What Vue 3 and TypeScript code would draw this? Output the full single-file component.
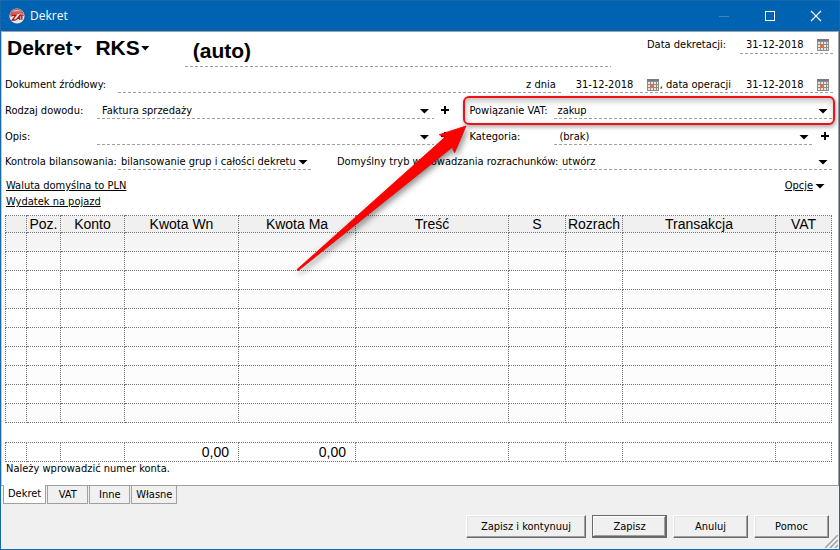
<script setup lang="ts">
import { ref } from 'vue'

interface Column {
  label: string
  width?: number
  total?: string
}

const columns: Column[] = [
  { label: '', width: 21 },
  { label: 'Poz.', width: 34 },
  { label: 'Konto', width: 64 },
  { label: 'Kwota Wn', width: 114, total: '0,00' },
  { label: 'Kwota Ma', width: 117, total: '0,00' },
  { label: 'Treść' },
  { label: 'S', width: 57 },
  { label: 'Rozrach', width: 57 },
  { label: 'Transakcja' },
  { label: 'VAT', width: 56 },
]

const tabs = ['Dekret', 'VAT', 'Inne', 'Własne']
const activeTab = ref('Dekret')

const number = ref('(auto)')
const source = ref('')
const postingDate = ref('31-12-2018')
const documentDate = ref('31-12-2018')
const operationDate = ref('31-12-2018')
</script>

<template>
  <div class="window">
    <header class="titlebar">
      <svg class="logo" viewBox="0 0 16 16" aria-hidden="true">
        <circle cx="8" cy="8" r="7.6" fill="#e9e6e6" />
        <path d="M1 6.4C2 2.4 5 .8 8 .8s6 1.8 7 5.2L11 5.6 1.600 9z" fill="#c9605e" />
        <path d="M3 3.800C5 1.600 10 1.400 12.600 3.600 9.500 3 6 3 3 3.800z" fill="#e9b3b3" />
        <path d="M2.800 7.400h4L3.200 12h3.600M7.200 11.800l3.600-4.400v4.600M8.400 10.400h3M10.400 7.200h4.400M12.800 7.200v4.600" fill="none" stroke="#b3151b" stroke-width="1.300" />
      </svg>
      <h1 class="title">Dekret</h1>
      <div class="window-buttons">
        <button type="button" class="window-button" aria-label="Minimalizuj" disabled>
          <svg viewBox="0 0 12 12"><path d="M1 6.500h10" stroke="#3c86c6" /></svg>
        </button>
        <button type="button" class="window-button" aria-label="Maksymalizuj">
          <svg viewBox="0 0 12 12"><rect x="1.500" y="1.500" width="9" height="9" fill="none" stroke="#fff" /></svg>
        </button>
        <button type="button" class="window-button" aria-label="Zamknij">
          <svg viewBox="0 0 12 12"><path d="M1 1l10 10M11 1L1 11" stroke="#fff" stroke-width="1.200" /></svg>
        </button>
      </div>
    </header>

    <main class="panel">
      <div class="row heading">
        <button type="button" class="menu-button">Dekret<i class="caret small"></i></button>
        <button type="button" class="menu-button">RKS<i class="caret small"></i></button>
        <input v-model="number" class="number line" aria-label="Numer" />
        <label class="date-label" for="posting">Data dekretacji:</label>
        <span class="date line">
          <input id="posting" v-model="postingDate" />
          <button type="button" class="calendar" aria-label="Kalendarz">
            <svg viewBox="0 0 12 12"><use href="#calendar-icon" /></svg>
          </button>
        </span>
      </div>

      <div class="row source">
        <label class="wide-label" for="source">Dokument źródłowy:</label>
        <span class="line source-field">
          <input id="source" v-model="source" />
          <label for="document">z dnia</label>
        </span>
        <span class="line dates">
          <span class="date">
            <input id="document" v-model="documentDate" />
            <button type="button" class="calendar" aria-label="Kalendarz">
              <svg viewBox="0 0 12 12"><use href="#calendar-icon" /></svg>
            </button>
          </span>
          <label for="operation">, data operacji</label>
          <span class="date last">
            <input id="operation" v-model="operationDate" />
            <button type="button" class="calendar" aria-label="Kalendarz">
              <svg viewBox="0 0 12 12"><use href="#calendar-icon" /></svg>
            </button>
          </span>
        </span>
      </div>

      <div class="pair">
        <div class="row">
          <label class="label" for="kind">Rodzaj dowodu:</label>
          <span class="combo line">
            <select id="kind"><option>Faktura sprzedaży</option></select>
            <i class="caret"></i>
          </span>
          <button type="button" class="add" aria-label="Dodaj rodzaj"></button>
        </div>
        <div class="row marked">
          <label class="side-label" for="vat">Powiązanie VAT:</label>
          <span class="combo line tight">
            <select id="vat"><option>zakup</option></select>
            <i class="caret"></i>
          </span>
          <span class="frame" aria-hidden="true"></span>
          <svg class="arrow" viewBox="0 0 180 155" aria-hidden="true">
            <path d="M173 3l-26.700 8.700 5.600 2.600L4 146.600l1 1.200L159.200 24.300l2.400 5.400z" fill="#f00" stroke="#e60000" stroke-width=".8" />
          </svg>
        </div>
        <div class="row">
          <label class="label" for="description">Opis:</label>
          <span class="combo line">
            <select id="description"><option></option></select>
            <i class="caret"></i>
          </span>
          <button type="button" class="add" aria-label="Dodaj opis"></button>
        </div>
        <div class="row">
          <label class="side-label" for="category">Kategoria:</label>
          <span class="combo line">
            <select id="category"><option>(brak)</option></select>
            <i class="caret"></i>
          </span>
          <button type="button" class="add" aria-label="Dodaj kategorię"></button>
        </div>
      </div>

      <div class="row balance">
        <label class="wide-label" for="control">Kontrola bilansowania:</label>
        <span class="combo line tight control">
          <select id="control"><option>bilansowanie grup i całości dekretu</option></select>
          <i class="caret"></i>
        </span>
        <label class="mode-label" for="mode">Domyślny tryb wprowadzania rozrachunków:</label>
        <span class="combo line tight mode">
          <select id="mode"><option>utwórz</option></select>
          <i class="caret"></i>
        </span>
      </div>

      <div class="links">
        <div class="link-list">
          <a href="#waluta">Waluta domyślna to PLN</a>
          <a href="#pojazd">Wydatek na pojazd</a>
        </div>
        <a class="options" href="#opcje">Opcje<i class="caret"></i></a>
      </div>

      <table class="entries">
        <colgroup>
          <col v-for="(column, i) in columns" :key="i" :style="column.width ? { width: column.width + 'px' } : undefined" />
        </colgroup>
        <thead>
          <tr><th v-for="(column, i) in columns" :key="i" scope="col">{{ column.label }}</th></tr>
        </thead>
        <tbody>
          <tr v-for="n in 10" :key="n"><td v-for="(column, i) in columns" :key="i"></td></tr>
        </tbody>
        <tfoot>
          <tr class="spacer"><td :colspan="columns.length"></td></tr>
          <tr><td v-for="(column, i) in columns" :key="i">{{ column.total }}</td></tr>
        </tfoot>
      </table>
      <p class="status">Należy wprowadzić numer konta.</p>
    </main>

    <nav class="tabs">
      <button
        v-for="tab in tabs"
        :key="tab"
        type="button"
        class="tab"
        :class="{ active: tab === activeTab }"
        @click="activeTab = tab"
      >{{ tab }}</button>
    </nav>

    <footer class="actions">
      <button type="button" class="action long">Zapisz i kontynuuj</button>
      <button type="button" class="action default">Zapisz</button>
      <button type="button" class="action">Anuluj</button>
      <button type="button" class="action">Pomoc</button>
      <svg class="grip" viewBox="0 0 13 13" aria-hidden="true">
        <path d="M0 13L13 0M5 13l8-8M10 13l3-3" stroke="#a0a0a0" stroke-width="1.500" />
      </svg>
    </footer>

    <svg class="symbols" aria-hidden="true">
      <symbol id="calendar-icon" viewBox="0 0 12 12">
        <g shape-rendering="crispEdges">
          <rect width="12" height="12" fill="#8c8c8c" />
          <rect y="0" width="12" height="2" fill="#7a7a7a" />
          <path d="M4 3h2v2H4zM7 3h2v2H7zM10 3h1v2h-1zM1 6h2v2H1zM7 6h2v2H7zM10 6h1v2h-1zM1 9h2v2H1zM4 9h2v2H4zM7 9h2v2H7zM10 9h1v2h-1zM1 3h2v2H1z" fill="#e6e6e6" />
          <rect x="3" y="6" width="3" height="3" fill="#e2703c" />
        </g>
      </symbol>
    </svg>
  </div>
</template>

<style>
body {
  margin: 0;
}
</style>

<style scoped>
.window {
  box-sizing: border-box;
  min-height: 100vh;
  display: flex;
  flex-direction: column;
  border: 1px solid #1769aa;
  background: #f0f0f0;
  color: #000;
  font: 11px/14px "DejaVu Sans Condensed", "DejaVu Sans", sans-serif;
}

button,
input,
select {
  box-sizing: border-box;
  margin: 0;
  padding: 0;
  border: 0;
  border-radius: 0;
  outline: 0;
  background: none;
  color: inherit;
  font: inherit;
}

input,
select {
  min-width: 0;
  width: 100%;
  appearance: none;
}

label,
button {
  white-space: nowrap;
}

.titlebar {
  display: flex;
  align-items: center;
  height: 30px;
  padding-left: 8px;
  background: #0063b1;
  color: #fff;
}

.logo {
  width: 16px;
  height: 16px;
}

.title {
  flex: 1;
  margin: 0 0 0 5px;
  font: 12px/16px "Open Sans", sans-serif;
}

.window-buttons {
  display: flex;
}

.window-button {
  display: grid;
  place-items: center;
  width: 46px;
  height: 30px;
}

.window-button svg {
  width: 12px;
  height: 12px;
}

.panel {
  flex: 1;
  padding: 0 5px 0 3px;
  border: 1px solid #a0a0a0;
  border-left-color: #c8c8c8;
  background: #fff;
}

.row {
  position: relative;
  display: flex;
  align-items: flex-end;
}

.line {
  background: repeating-linear-gradient(90deg, #a0a0a0 0 3px, transparent 3px 5px) bottom / 100% 1px no-repeat;
}

.caret {
  width: 10px;
  height: 5px;
  background: #000;
  clip-path: polygon(0 0, 100% 0, 50% 100%);
}

.heading {
  height: 35px;
  align-items: flex-start;
}

.menu-button {
  display: flex;
  align-items: center;
  margin: 4px 11px 0 2px;
  font: bold 21px/24px "Liberation Sans", sans-serif;
}

.caret.small {
  width: 9px;
  margin-left: 1px;
}

.number {
  flex: 1;
  height: 35px;
  margin-left: 24px;
  padding: 2px 0 0 8px;
  font: bold 21px/24px "Liberation Sans", sans-serif;
}

.date-label {
  margin: 6px 14px 0 36px;
}

.date {
  display: flex;
  align-items: center;
  width: 87px;
  padding-left: 6px;
}

.heading .date {
  height: 22px;
  padding-top: 3px;
  box-sizing: border-box;
  width: 93px;
}

.calendar,
.calendar svg {
  display: block;
  width: 12px;
  height: 12px;
}

.calendar {
  flex: none;
  margin-right: 4px;
}

.source {
  height: 26px;
}

.label,
.side-label,
.wide-label,
.mode-label {
  padding-bottom: 1px;
}

.wide-label {
  width: 113px;
}

.source-field {
  flex: 1;
  display: flex;
  align-items: center;
  height: 16px;
  margin-right: 7px;
  padding-right: 7px;
}

.dates {
  display: flex;
  align-items: center;
  height: 16px;
}

.dates .date {
  width: 84px;
}

.dates .date .calendar {
  margin-right: 1px;
}

.dates .date.last {
  width: 87px;
  margin-left: 9px;
}

.dates .date.last .calendar {
  margin-right: 4px;
}

.pair {
  display: grid;
  grid-template-columns: minmax(0, 449fr) minmax(0, 364fr);
  column-gap: 16px;
}

.pair .row {
  height: 26px;
}

.label {
  width: 92px;
}

.side-label {
  width: 85px;
}

.combo {
  flex: 1;
  display: grid;
  align-items: center;
  height: 16px;
}

.combo select,
.combo .caret {
  grid-area: 1 / 1;
}

.combo select {
  padding: 0 14px 0 5px;
}

.combo.tight select {
  padding-left: 3px;
}

.combo .caret {
  justify-self: end;
  margin-right: 5px;
  pointer-events: none;
}

.add {
  width: 8px;
  height: 8px;
  margin: 0 4px 5px 7px;
  background:
    linear-gradient(#000, #000) center / 8px 2px no-repeat,
    linear-gradient(#000, #000) center / 2px 8px no-repeat;
}

.frame {
  position: absolute;
  inset: 3px -2px -6px -6px;
  border: 2px solid #f01018;
  border-radius: 6px;
  box-shadow: 1px 2px 4px rgba(0, 0, 0, 0.35), inset 1px 3px 6px rgba(0, 0, 0, 0.25);
  pointer-events: none;
}

.arrow {
  position: absolute;
  z-index: 2;
  top: 30px;
  left: -176px;
  width: 180px;
  height: 155px;
  overflow: visible;
  filter: drop-shadow(2px 3px 3px rgba(0, 0, 0, 0.45));
  pointer-events: none;
}

.balance {
  height: 25px;
}

.control {
  flex: 0 0 195px;
}

.mode-label {
  width: 222px;
  margin-left: 24px;
}

.links {
  display: flex;
  justify-content: space-between;
  padding: 8px 8px 0 1px;
}

.link-list {
  display: flex;
  flex-direction: column;
  align-items: flex-start;
}

.links a {
  color: inherit;
  line-height: 16px;
}

.options {
  display: flex;
  align-items: center;
  align-self: flex-start;
  gap: 2px;
  text-decoration: underline;
}

.entries {
  width: calc(100% - 1px);
  margin-top: 5px;
  table-layout: fixed;
  border-collapse: collapse;
  font: 14px/16px "Liberation Sans", sans-serif;
}

.entries th,
.entries td {
  box-sizing: border-box;
  height: 19px;
  padding: 0;
  border: 1px dotted #777;
  font-weight: normal;
  white-space: nowrap;
}

.entries th {
  height: 17px;
  background: #f0f0f0;
}

.entries tbody tr:nth-child(even) {
  background: #fcfcfc;
}

.entries tbody tr:first-child {
  background: #f5f5f5;
}

.entries tfoot td {
  padding-right: 9px;
  text-align: right;
}

.entries .spacer td {
  height: 20px;
  border-right: 0;
  border-left: 0;
}

.status {
  margin: 0 0 0 1px;
}

.tabs {
  display: flex;
  gap: 1px;
  padding-left: 2px;
}

.tab {
  height: 18px;
  min-width: 41px;
  padding: 0 4px;
  border: 1px solid #a0a0a0;
  border-top: 0;
}

.tab.active {
  margin-top: -1px;
  height: 19px;
  background: #fff;
}

.actions {
  position: relative;
  display: flex;
  justify-content: flex-end;
  gap: 6px;
  padding: 11px 10px 11px;
}

.action {
  width: 75px;
  height: 23px;
  border: 1px solid;
  border-color: #fff #696969 #696969 #fff;
  box-shadow: inset -1px -1px #a0a0a0, inset 1px 1px #e3e3e3;
}

.action.long {
  width: 120px;
}

.action.default {
  border-color: #696969;
  box-shadow: inset -1px -1px #696969, inset 1px 1px #fff, inset -2px -2px #a0a0a0;
}

.grip {
  position: absolute;
  right: 1px;
  bottom: 1px;
  width: 13px;
  height: 13px;
}

.symbols {
  position: absolute;
  width: 0;
  height: 0;
}
</style>
